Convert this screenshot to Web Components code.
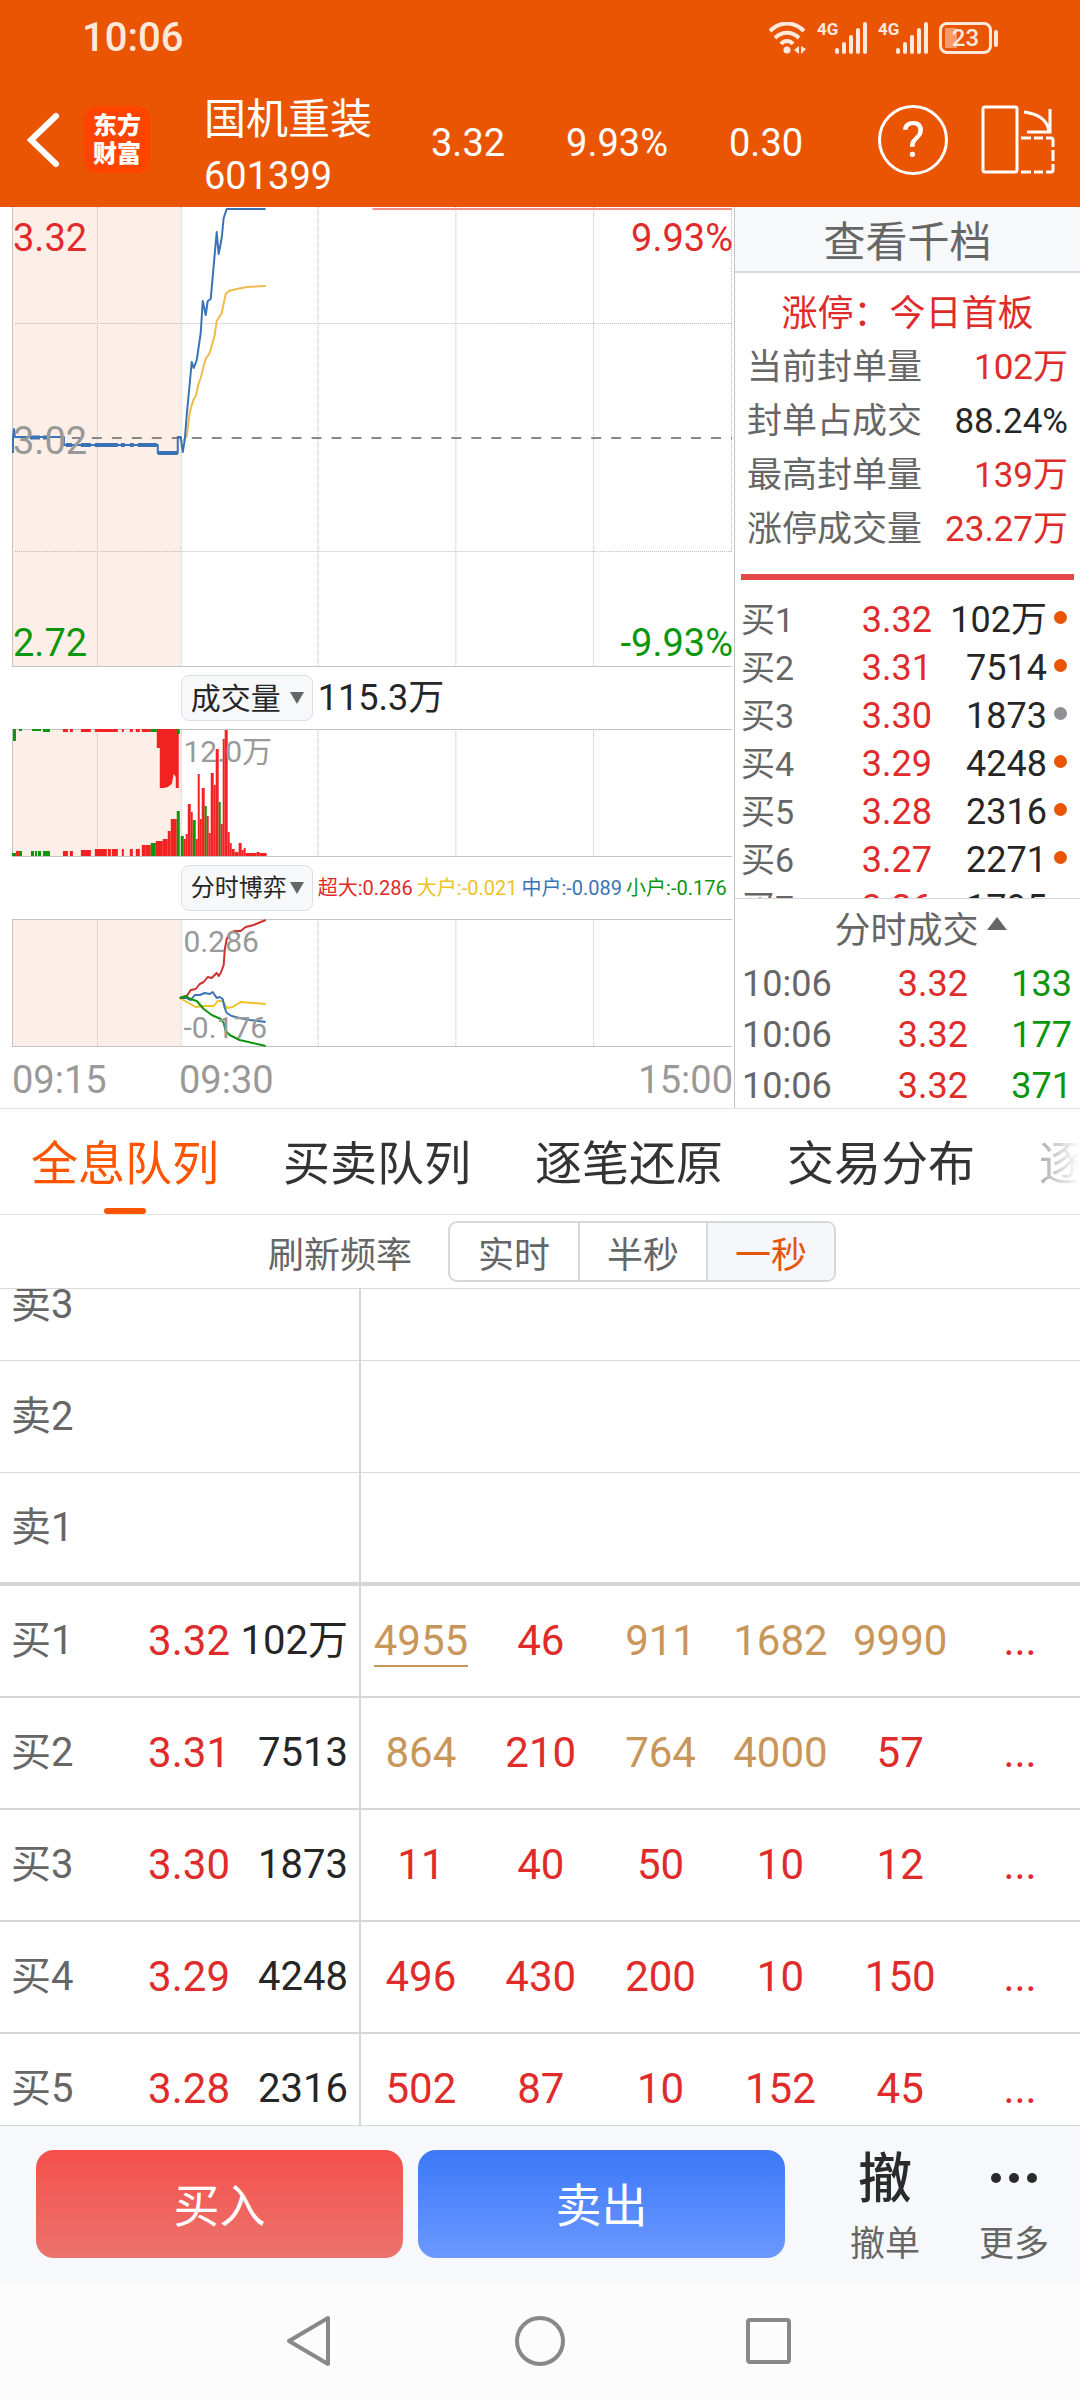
<!DOCTYPE html>
<html lang="zh-CN">
<head>
<meta charset="utf-8">
<meta name="viewport" content="width=device-width, initial-scale=1">
<title>国机重装 601399</title>
<style>
  html, body { margin: 0; height: 100%; }
  body {
    --up: #e02b2b;
    --down: #0c960c;
    --ink: #262626;
    --muted: #666;
    --faint: #999;
    --line: #d5d7db;
    --brand: #ea5504;
    font-family: Roboto, "Noto Sans CJK SC", sans-serif;
    color: var(--ink);
    background: #fff;
  }
</style>
</head>
<body>
<stock-app></stock-app>

<script>
// Registers an element whose shadow root is cloned from the given markup.
function define(name, html, setup) {
  const template = document.createElement('template');
  template.innerHTML = html;
  customElements.define(name, class extends HTMLElement {
    constructor() {
      super();
      this.attachShadow({ mode: 'open' })
          .appendChild(template.content.cloneNode(true));
    }
    connectedCallback() {
      if (setup) setup(this.shadowRoot, this);
    }
  });
}

/* ---------- status bar ---------- */

define('status-bar', `
  <style>
    :host {
      display: flex;
      align-items: center;
      justify-content: space-between;
      height: 76px;
      padding: 0 82px;
      background: var(--brand);
      color: #ffe9dc;
    }
    .time { font-size: 40px; font-weight: 500; line-height: 40px; }
    .icons { display: flex; align-items: center; gap: 10px; }
    .signal { display: flex; align-items: flex-start; }
    .net { font-size: 17px; font-weight: 700; line-height: 14px; width: 18px; }
    .battery { display: flex; align-items: center; gap: 2px; }
    .cell {
      box-sizing: border-box;
      width: 53px;
      height: 32px;
      border: 3px solid #ffe9dc;
      border-radius: 8px;
      background: linear-gradient(#f59a68, #f59a68) 3px 3px / 12px 20px no-repeat;
      font-size: 24px;
      font-weight: 500;
      line-height: 26px;
      text-align: center;
    }
    .nub { width: 4px; height: 17px; border-radius: 2px; background: #ffe9dc; }
    svg { display: block; }
  </style>
  <span class="time">10:06</span>
  <div class="icons">
    <svg width="38" height="32" viewBox="0 0 38 32" fill="none" stroke="#ffe9dc" stroke-width="4">
      <path d="M1 9C11-1 25-1 35 9M6 16C13 9 23 9 30 16M12 22C15 18 21 18 24 22"/>
      <circle cx="18" cy="28" r="3.5" fill="#ffe9dc" stroke="none"/>
      <path d="M30 24V32L25 28ZM32 24V32L37 27Z" fill="#ffe9dc" stroke="none"/>
    </svg>
    <div class="signal"><span class="net">4G</span>
      <svg width="33" height="32" viewBox="0 0 33 32" stroke="#ffe9dc" stroke-width="4" stroke-linecap="round"><path d="M2 28V30M9 22V30M16 15V30M23 8V30M30 2V30"/></svg>
    </div>
    <div class="signal"><span class="net">4G</span>
      <svg width="33" height="32" viewBox="0 0 33 32" stroke="#ffe9dc" stroke-width="4" stroke-linecap="round"><path d="M2 28V30M9 22V30M16 15V30M23 8V30M30 2V30"/></svg>
    </div>
    <div class="battery"><div class="cell">23</div><div class="nub"></div></div>
  </div>
`);

/* ---------- title bar ---------- */

define('quote-header', `
  <style>
    :host {
      display: flex;
      align-items: center;
      height: 127px;
      padding: 0 24px 4px;
      background: var(--brand);
      color: #fff;
    }
    button {
      padding: 0;
      border: 0;
      background: none;
      color: inherit;
      font: inherit;
    }
    svg { display: block; }
    .logo {
      width: 66px;
      padding: 6px 0 5px;
      margin-left: 22px;
      border-radius: 14px;
      background: #ff4400;
      font-size: 24px;
      font-weight: 900;
      line-height: 28px;
      text-align: center;
    }
    .name { margin-left: 54px; width: 227px; padding-top: 16px; }
    .name div { font-size: 42px; line-height: 56px; }
    .name .code { font-size: 38px; }
    .figures { flex: 1; display: flex; gap: 61px; padding-top: 7px; font-size: 38px; line-height: 48px; }
    .help {
      box-sizing: border-box;
      width: 70px;
      height: 70px;
      border: 3px solid #fff;
      border-radius: 50%;
      font-size: 50px;
      line-height: 64px;
    }
    .rotate { margin-left: 33px; }
  </style>
  <button aria-label="返回">
    <svg width="38" height="60" viewBox="0 0 38 60" fill="none" stroke="#fff" stroke-width="6" stroke-linecap="round"><path d="M32 6L7 30L32 54"/></svg>
  </button>
  <div class="logo">东方<br>财富</div>
  <div class="name"><div>国机重装</div><div class="code">601399</div></div>
  <div class="figures"><span>3.32</span><span>9.93%</span><span>0.30</span></div>
  <button class="help" aria-label="帮助">?</button>
  <button class="rotate" aria-label="横屏">
    <svg width="75" height="70" viewBox="0 0 75 70" fill="none" stroke="#fff" stroke-width="3">
      <rect x="2" y="2" width="34" height="65" rx="2"/>
      <path d="M43 7C58 9 67 16 68 27M69 4V27H46"/>
      <path d="M40 33H50M53 33H62M65 33H70Q72 33 72 35V42M72 45V56M72 59V65Q72 67 70 67H65M62 67H53M50 67H40"/>
    </svg>
  </button>
`);

/* ---------- charts ---------- */

// Grid lines shared by the three charts. y and h are the canvas band of the chart.
function gridMarkup(y, h) {
  const bottom = y + h - 1;
  const verticals = [97, 181, 318, 456, 594]
    .map(x => `<path d="M${x}.5 ${y}V${bottom}" stroke-dasharray="1 1"/>`).join('');
  return `
    <rect x="13" y="${y}" width="168" height="${h}" fill="#fdeee7"/>
    <g stroke="#bbb" stroke-width="1" fill="none">
      ${verticals}
      <path d="M12.5 ${y}V${bottom}M12 ${bottom + .5}H733" stroke="#c4c4c4"/>
    </g>`;
}

const chartStyle = `
  <style>
    :host { display: grid; }
    svg { grid-area: 1 / 1; width: 100%; display: block; }
    .labels {
      grid-area: 1 / 1;
      display: flex;
      flex-direction: column;
      justify-content: space-between;
      z-index: 1;
    }
    .over { padding: 8px 0 4px 25%; font-size: 30px; line-height: 30px; color: var(--faint); }
  </style>
`;

define('price-chart', `
  ${chartStyle}
  <style>
    svg { height: 460px; }
    .labels { padding: 11px 1px 4px 13px; font-size: 38px; line-height: 40px; }
    .row { display: flex; justify-content: space-between; }
    .up { color: var(--up); }
    .flat { color: var(--faint); }
    .down { color: var(--down); }
  </style>
  <svg viewBox="0 207 735 460" preserveAspectRatio="none">
    ${gridMarkup(207, 460)}
    <g stroke="#bbb" stroke-dasharray="1 1"><path d="M15 323.5H733M15 551.5H733M732.5 209V552"/></g>
    <path d="M72 438H733" stroke="#888" stroke-width="2" stroke-dasharray="10 10"/>
    <path d="M373 209H733" stroke="#f29089" stroke-width="2"/>
    <path d="M183 441L187 436L190 413L192 405L194 399L196 396L199 383L201 378L204 366L206 359L210 353L215 335L217 321L222 313L226 294L229 291L237 289L247 287L266 286" fill="none" stroke="#efbb4f" stroke-width="2"/>
    <g fill="none" stroke="#3a73b5" stroke-width="2" stroke-linejoin="round">
      <path d="M13 453V437L14 429L15 437H64V445H158V453H178V437H181L183 452L185 440L187 415L192 362L194 368L197 360L201 333L203 301L206 315L208 301L211 299L217 232L219 254L222 238L224 218L227 209H266"/>
      <path d="M30 437.5H40M43 437.5H50M66 445H72M81 445H91M95 445H118M121 445H125M130 445H134M138 445H157M158 453H178" stroke-width="4"/>
    </g>
  </svg>
  <div class="labels">
    <div class="row up"><span>3.32</span><span>9.93%</span></div>
    <div class="row flat"><span>3.02</span></div>
    <div class="row down"><span>2.72</span><span>-9.93%</span></div>
  </div>
`);

// [left, right, top, colour] of each bar standing on the base line
const volumeBars = [
  [12, 16, 853, 'g'], [16, 19, 851, 'r'], [19, 22, 851, 'g'], [31, 34, 851, 'g'],
  [35, 37, 851, 'g'], [38, 41, 851, 'g'], [43, 50, 851, 'g'], [63, 68, 851, 'r'],
  [70, 73, 851, 'r'], [81, 91, 850, 'r'], [95, 107, 849, 'r'], [108, 111, 849, 'r'],
  [112, 118, 849, 'r'], [122, 124, 849, 'r'], [130, 133, 849, 'r'], [136, 140, 849, 'r'],
  [142, 146, 845, 'r'], [146, 151, 845, 'r'], [151, 156, 843, 'g'], [156, 163, 841, 'r'],
  [163, 168, 839, 'r'], [168, 171, 831, 'r'], [171, 177, 819, 'r'], [177, 180, 811, 'g'],
  [181, 184, 836, 'g'], [184, 186, 839, 'r'], [186, 188, 834, 'r'], [188, 191, 804, 'r'],
  [191, 193, 812, 'r'], [193, 196, 820, 'g'], [196, 198, 839, 'r'], [198, 200, 774, 'r'],
  [200, 202, 819, 'r'], [202, 205, 788, 'r'], [205, 207, 806, 'g'], [207, 209, 816, 'r'],
  [209, 211, 833, 'r'], [211, 214, 773, 'r'], [214, 216, 785, 'r'], [216, 219, 749, 'r'],
  [219, 221, 802, 'g'], [221, 223, 824, 'r'], [223, 225, 739, 'r'], [225, 228, 730, 'r'],
  [228, 230, 832, 'r'], [230, 232, 843, 'r'], [232, 235, 849, 'r'], [235, 239, 852, 'r'],
  [239, 242, 843, 'r'], [242, 244, 850, 'r'], [244, 246, 848, 'r'], [246, 257, 853, 'r'],
  [257, 260, 852, 'r'], [260, 267, 853, 'r']
];

define('volume-chart', `
  ${chartStyle}
  <style>svg { height: 128px; }</style>
  <svg viewBox="0 729 735 128" preserveAspectRatio="none">
    ${gridMarkup(729, 128)}
    <path d="M12 729.5H733" stroke="#c4c4c4"/>
    <path d="M157 729H179V788H176V777L174 774L172 784L168 787L164 788H160V748H157Z" fill="#f32222"/>
    <g stroke-width="3">
      <path d="M63 730.5H68M70 730.5H73M81 730.5H91M95 730.5H118M122 730.5H124M130 730.5H133M136 730.5H140M142 730.5H151" stroke="#f32222"/>
      <path d="M19 729.5H22M32 729.5H41M43 730.5H50M151 730.5H157" stroke="#0c960c"/>
    </g>
    <path d="M13 729H16V741H13ZM177 729H180V734H177Z" fill="#0c960c"/>
    <g class="bars"></g>
  </svg>
  <div class="labels over"><span>12.0万</span></div>
`, root => {
  root.querySelector('.bars').innerHTML = volumeBars.map(([x1, x2, top, c]) =>
    `<rect x="${x1}" y="${top}" width="${x2 - x1}" height="${856 - top}" fill="${c === 'r' ? '#f32222' : '#0c960c'}"/>`
  ).join('');
});

define('flow-chart', `
  ${chartStyle}
  <style>svg { height: 128px; }</style>
  <svg viewBox="0 919 735 128" preserveAspectRatio="none">
    ${gridMarkup(919, 128)}
    <path d="M12 919.5H733" stroke="#c4c4c4"/>
    <g fill="none" stroke-width="2" stroke-linejoin="round">
      <path stroke="#ecc227" d="M180 998L187 1002L196 1007L204 1006L214 1006L218 1001L223 1001L227 1008L233 1007L241 1002L266 1004"/>
      <path stroke="#3a73b5" d="M180 998L187 998L191 1000L195 995L200 995L205 993L210 994L213 992L217 998L220 997L223 999L225 1008L227 1013L232 1016L240 1018L250 1020L266 1022"/>
      <path stroke="#d22e2e" d="M180 998L184 997L187 996L191 990L196 989L200 984L204 982L208 977L212 978L217 973L219 976L221 973L224 965L225 950L227 939L230 933L235 931L241 931L246 927L254 925L266 920"/>
      <path stroke="#0c960c" d="M180 998L186 996L191 999L197 1001L204 1009L212 1015L221 1019L224 1023L226 1031L230 1035L240 1040L266 1046"/>
    </g>
  </svg>
  <div class="labels over"><span>0.286</span><span>-0.176</span></div>
`);

// Drop-down that names the indicator, with its current readings in the slot.
define('indicator-row', `
  <style>
    :host {
      display: grid;
      grid-template-columns: 181fr 554fr;
      align-items: center;
      height: 62px;
    }
    .body { grid-column: 2; display: flex; align-items: center; gap: 5px; white-space: nowrap; }
    .pick {
      box-sizing: border-box;
      display: grid;
      align-items: center;
      width: 132px;
      height: 46px;
      border: 1px solid #dcdfe6;
      border-radius: 8px;
      background: #f7f8fa;
    }
    select {
      grid-area: 1 / 1;
      appearance: none;
      height: 44px;
      padding: 0 0 0 9px;
      border: 0;
      background: none;
      color: var(--ink);
      font-family: inherit;
      font-size: 30px;
    }
    :host([small]) select { font-size: 24px; }
    svg { grid-area: 1 / 1; justify-self: end; margin-right: 8px; pointer-events: none; }
  </style>
  <div class="body">
    <div class="pick">
      <select aria-label="指标"><option></option></select>
      <svg width="14" height="12"><path d="M0 0H14L7 12Z" fill="#666"/></svg>
    </div>
    <slot></slot>
  </div>
`, (root, host) => {
  root.querySelector('option').textContent = host.getAttribute('name');
});

define('chart-column', `
  <style>
    :host { display: block; border-right: 1px solid #c4c4c4; min-width: 0; }
    .total { font-size: 36px; line-height: 40px; }
    .flows { display: flex; gap: 4px; font-size: 20px; line-height: 40px; }
    .axis {
      display: grid;
      grid-template-columns: 167fr 277fr 277fr;
      padding: 13px 1px 8px 12px;
      font-size: 38px;
      line-height: 40px;
      color: var(--faint);
    }
    .axis :last-child { text-align: right; }
  </style>
  <price-chart></price-chart>
  <indicator-row name="成交量"><span class="total">115.3万</span></indicator-row>
  <volume-chart></volume-chart>
  <indicator-row name="分时博弈" small>
    <span class="flows">
      <span style="color:var(--up)">超大:0.286</span>
      <span style="color:#ecc227">大户:-0.021</span>
      <span style="color:#3a73b5">中户:-0.089</span>
      <span style="color:var(--down)">小户:-0.176</span>
    </span>
  </indicator-row>
  <flow-chart></flow-chart>
  <div class="axis"><span>09:15</span><span>09:30</span><span>15:00</span></div>
`);

/* ---------- order book beside the charts ---------- */

const bids = [
  ['买1', '3.32', '102万', 1], ['买2', '3.31', '7514', 1], ['买3', '3.30', '1873', 0],
  ['买4', '3.29', '4248', 1], ['买5', '3.28', '2316', 1], ['买6', '3.27', '2271', 1],
  ['买7', '3.26', '1795', 0]
];
const trades = [['10:06', '3.32', '133'], ['10:06', '3.32', '177'], ['10:06', '3.32', '371']];

define('order-panel', `
  <style>
    :host { display: flex; flex-direction: column; min-width: 0; }
    button { border: 0; background: none; font-family: inherit; color: var(--muted); padding: 0; }
    .more {
      height: 66px;
      flex: none;
      padding-top: 8px;
      border-bottom: 2px solid var(--line);
      background: #f7f8fa;
      font-size: 42px;
      line-height: 56px;
    }
    .limit { padding: 14px 12px 17px; border-bottom: 6px solid #e54848; margin: 0 6px; }
    .limit h2 { margin: 0; font-size: 36px; font-weight: 400; line-height: 54px; text-align: center; color: var(--up); }
    dl { margin: 0; }
    dl div { display: flex; justify-content: space-between; margin: 0 -6px; }
    dt, dd { margin: 0; font-size: 35px; line-height: 54px; color: var(--muted); }
    dd { color: var(--up); }
    dd.plain { color: var(--ink); }
    table { width: 100%; border-collapse: collapse; font-size: 36px; }
    td { padding: 0; }
    .book {
      flex: 1 1 0;
      min-height: 0;
      overflow: hidden;
      padding: 16px 13px 0 6px;
      border-bottom: 1px solid var(--line);
    }
    .book td { height: 48px; line-height: 48px; }
    .book td:first-child { font-size: 34px; color: var(--muted); }
    .book td:nth-child(2), .book td:nth-child(3) { text-align: right; }
    .book td:nth-child(2) { width: 84px; color: var(--up); }
    .book td:nth-child(3) { width: 115px; }
    .dot { width: 20px; }
    .dot i { display: block; width: 13px; height: 13px; margin: -6px 0 0 auto; border-radius: 50%; background: #8f8f94; }
    .dot i.hot { background: var(--brand); }
    .toggle {
      display: flex;
      align-items: center;
      justify-content: center;
      gap: 8px;
      height: 56px;
      flex: none;
      padding-left: 26px;
      font-size: 36px;
    }
    .trades { padding: 0 8px 0 7px; }
    .trades td { padding-top: 7px; line-height: 44px; color: var(--muted); }
    .trades td:nth-child(2), .trades td:nth-child(3) { text-align: right; }
    .trades td:nth-child(2) { color: var(--up); }
    .trades td:nth-child(3) { width: 104px; color: var(--down); }
  </style>
  <button class="more">查看千档</button>
  <section class="limit">
    <h2>涨停：今日首板</h2>
    <dl>
      <div><dt>当前封单量</dt><dd>102万</dd></div>
      <div><dt>封单占成交</dt><dd class="plain">88.24%</dd></div>
      <div><dt>最高封单量</dt><dd>139万</dd></div>
      <div><dt>涨停成交量</dt><dd>23.27万</dd></div>
    </dl>
  </section>
  <div class="book"><table></table></div>
  <button class="toggle">分时成交<svg width="20" height="22"><path d="M10 1L20 14H0Z" fill="#666"/></svg></button>
  <div class="trades"><table></table></div>
`, root => {
  root.querySelector('.book table').innerHTML = bids.map(([level, price, size, hot]) =>
    `<tr><td>${level}</td><td>${price}</td><td>${size}</td><td class="dot"><i class="${hot ? 'hot' : ''}"></i></td></tr>`
  ).join('');
  root.querySelector('.trades table').innerHTML = trades.map(row =>
    `<tr>${row.map(cell => `<td>${cell}</td>`).join('')}</tr>`
  ).join('');
});

/* ---------- tabs and refresh rate ---------- */

define('queue-tabs', `
  <style>
    :host {
      display: block;
      border-top: 1px solid #e3e4e6;
      border-bottom: 1px solid #e3e4e6;
    }
    nav {
      display: flex;
      gap: 64px;
      height: 105px;
      padding-left: 31px;
      overflow: hidden;
      -webkit-mask: linear-gradient(to right, #000 calc(100% - 100px), transparent);
      mask: linear-gradient(to right, #000 calc(100% - 100px), transparent);
    }
    a {
      display: flex;
      flex-direction: column;
      justify-content: space-between;
      align-items: center;
      flex: none;
      padding-top: 28px;
      font-size: 47px;
      line-height: 54px;
      color: #333;
      text-decoration: none;
    }
    a.on { color: #ff5500; }
    a.on::after { content: ''; width: 42px; height: 6px; border-radius: 3px; background: #ff5500; }
  </style>
  <nav>
    <a class="on" href="#holo">全息队列</a>
    <a href="#queue">买卖队列</a>
    <a href="#tick">逐笔还原</a>
    <a href="#spread">交易分布</a>
    <a href="#detail">逐</a>
  </nav>
`);

define('refresh-rate', `
  <style>
    :host {
      display: flex;
      align-items: center;
      justify-content: center;
      gap: 36px;
      height: 73px;
      padding-right: 240px;
      padding-left: 264px;
      font-size: 36px;
      color: var(--muted);
      border-bottom: 1px solid var(--line);
    }
    span { white-space: nowrap; }
    .group { display: flex; border: 2px solid var(--line); border-radius: 9px; overflow: hidden; }
    button {
      width: 128px;
      height: 57px;
      padding: 0;
      border: 0;
      background: none;
      color: inherit;
      font: inherit;
    }
    button + button { border-left: 2px solid var(--line); }
    button[aria-pressed="true"] { background: #f5f7fa; color: #e2560d; }
  </style>
  <span>刷新频率</span>
  <div class="group">
    <button aria-pressed="false">实时</button>
    <button aria-pressed="false">半秒</button>
    <button aria-pressed="true">一秒</button>
  </div>
`, root => {
  const buttons = root.querySelectorAll('button');
  buttons.forEach(button => button.addEventListener('click', () => {
    buttons.forEach(b => b.setAttribute('aria-pressed', String(b === button)));
  }));
});

/* ---------- queue table ---------- */

// A leading * marks a large order.
const queues = [
  ['卖3'], ['卖2'], ['卖1'],
  ['买1', '3.32', '102万', '*4955', '46', '*911', '*1682', '*9990'],
  ['买2', '3.31', '7513', '*864', '210', '*764', '*4000', '57'],
  ['买3', '3.30', '1873', '11', '40', '50', '10', '12'],
  ['买4', '3.29', '4248', '496', '430', '200', '10', '150'],
  ['买5', '3.28', '2316', '502', '87', '10', '152', '45']
];

define('queue-table', `
  <style>
    :host { display: block; flex: 1 1 0; min-height: 0; overflow: hidden; }
    table {
      width: 100%;
      table-layout: fixed;
      border-collapse: separate;
      border-spacing: 0;
      font-size: 42px;
      line-height: 48px;
    }
    td { height: 110px; padding: 0; text-align: center; border-bottom: 2px solid var(--line); white-space: nowrap; }
    .ask td { height: 111px; border-bottom-width: 1px; }
    .ask.best td { height: 109px; border-bottom-width: 4px; }
    .level { width: 112px; padding-left: 11px; text-align: left; font-size: 40px; color: var(--muted); }
    .price { width: 107px; text-align: right; color: var(--up); }
    .size { width: 118px; padding-right: 11px; text-align: right; font-size: 40px; border-right: 2px solid var(--line); }
    .order { color: var(--up); }
    .big { color: #c8965a; }
    .first span { border-bottom: 2px solid #c8965a; }
  </style>
  <table></table>
`, (root, host) => {
  root.querySelector('table').innerHTML = queues.map(([level, price = '', size = '', ...orders], r) => {
    const cells = price ? [...orders, '...'] : ['', '', '', '', '', ''];
    return `<tr class="${price ? '' : 'ask'} ${level === '卖1' ? 'best' : ''}">
      <td class="level">${level}</td><td class="price">${price}</td><td class="size">${size}</td>
      ${cells.map((o, i) => `<td class="order ${o[0] === '*' ? 'big' : ''} ${r === 3 && i === 0 ? 'first' : ''}"><span>${o.replace('*', '')}</span></td>`).join('')}
    </tr>`;
  }).join('');
  // open near the best bid, so the third offer is partly scrolled away
  requestAnimationFrame(() => { host.scrollTop = 40; });
  host.scrollTop = 40;
});

/* ---------- bottom bars ---------- */

define('trade-bar', `
  <style>
    :host {
      display: grid;
      grid-template-columns: 367fr 367fr 280fr;
      align-items: center;
      gap: 15px;
      height: 156px;
      padding-left: 36px;
      border-top: 1px solid var(--line);
      background: #f6f8fb;
    }
    button { padding: 0; border: 0; background: none; font-family: inherit; }
    .buy, .sell { height: 108px; padding-bottom: 4px; border-radius: 18px; color: #fff; font-size: 46px; }
    .buy { background: linear-gradient(#f5504b, #ec736d); }
    .sell { background: linear-gradient(#3c78f8, #6b99ff); }
    .side { display: flex; justify-content: space-between; padding: 14px 31px 0 50px; }
    .side button { display: flex; flex-direction: column; align-items: center; font-size: 35px; line-height: 48px; color: var(--muted); }
    .side b { height: 68px; font-size: 54px; font-weight: 500; line-height: 54px; color: #2b2b2b; }
    .side svg { display: block; height: 54px; }
  </style>
  <button class="buy">买入</button>
  <button class="sell">卖出</button>
  <div class="side">
    <button><b>撤</b>撤单</button>
    <button><b><svg width="48" viewBox="0 0 48 54" fill="#2b2b2b"><circle cx="6" cy="25" r="5"/><circle cx="24" cy="25" r="5"/><circle cx="42" cy="25" r="5"/></svg></b>更多</button>
  </div>
`);

define('system-nav', `
  <style>
    :host {
      display: flex;
      align-items: center;
      justify-content: center;
      gap: 178px;
      height: 118px;
      background: #fcfcfc;
    }
    button { padding: 0; border: 0; background: none; }
    svg { display: block; }
  </style>
  <button aria-label="返回"><svg width="52" height="52" viewBox="0 0 52 52" fill="none" stroke="#888" stroke-width="4" stroke-linejoin="round"><path d="M44 3V49L5 26Z"/></svg></button>
  <button aria-label="主屏幕"><svg width="52" height="52" viewBox="0 0 52 52" fill="none" stroke="#888" stroke-width="4"><circle cx="26" cy="26" r="23"/></svg></button>
  <button aria-label="最近任务"><svg width="52" height="52" viewBox="0 0 52 52" fill="none" stroke="#888" stroke-width="4"><rect x="4" y="5" width="41" height="42" rx="2"/></svg></button>
`);

/* ---------- page ---------- */

define('stock-app', `
  <style>
    :host { display: flex; flex-direction: column; height: 100vh; overflow: hidden; }
    status-bar, quote-header, queue-tabs, refresh-rate, trade-bar, system-nav { flex: none; }
    .quote { display: grid; grid-template-columns: 49fr 23fr; flex: none; }
  </style>
  <status-bar></status-bar>
  <quote-header></quote-header>
  <main class="quote">
    <chart-column></chart-column>
    <order-panel></order-panel>
  </main>
  <queue-tabs></queue-tabs>
  <refresh-rate></refresh-rate>
  <queue-table></queue-table>
  <trade-bar></trade-bar>
  <system-nav></system-nav>
`);
</script>
</body>
</html>
